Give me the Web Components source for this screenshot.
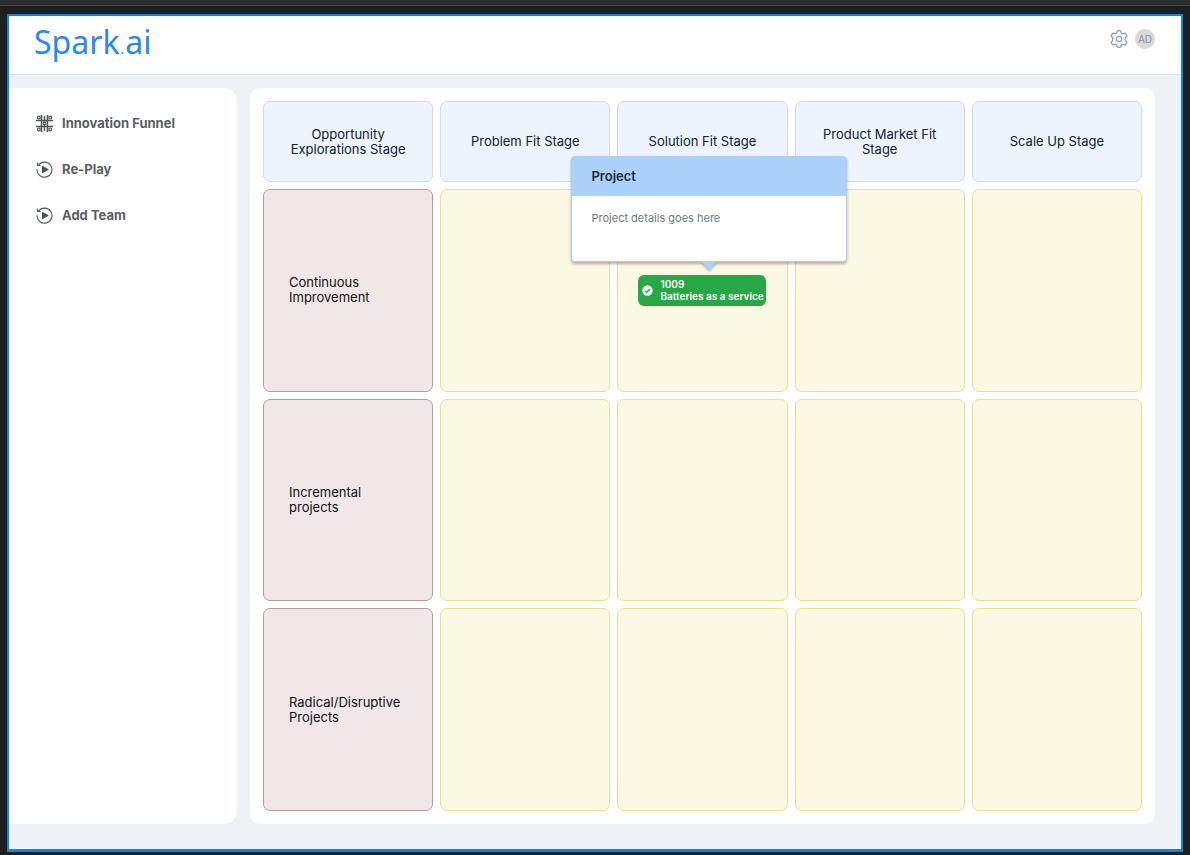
<!DOCTYPE html>
<html lang="en">
<head>
<meta charset="utf-8">
<title>Spark.ai</title>
<style>
  html, body { margin: 0; }
  body { background: #1e1e1e; font-family: Inter, "Liberation Sans", sans-serif; font-size: 13px; }
</style>
</head>
<body>
<app-frame>
  <app-header slot="header" initials="AD"></app-header>
  <side-nav slot="nav">
    <nav-item icon="funnel">Innovation Funnel</nav-item>
    <nav-item icon="replay">Re-Play</nav-item>
    <nav-item icon="replay">Add Team</nav-item>
  </side-nav>
  <funnel-board>
    <project-chip slot="cell-0-2" number="1009" name="Batteries as a service">
      <project-popover>
        <span slot="title">Project</span>
        Project details goes here
      </project-popover>
    </project-chip>
  </funnel-board>
</app-frame>
<script>
const define = (name, html, setup) => {
  const template = document.createElement('template');
  template.innerHTML = html;
  customElements.define(name, class extends HTMLElement {
    constructor() {
      super();
      this.attachShadow({ mode: 'open' }).append(template.content.cloneNode(true));
    }
    connectedCallback() { if (setup) setup(this, this.shadowRoot); }
  });
};

define('app-frame', `
  <style>
    :host { display: flex; flex-direction: column; box-sizing: border-box; min-height: 100vh; padding: 0 7px 3px; }
    .strip { height: 5px; margin: 0 -7px 8px; background: #2c2c2c; border-bottom: 1px solid #464646; }
    .window { flex: 1; display: flex; flex-direction: column; border: 2px solid #0d86e3; border-bottom-width: 3px; background: #eef1f6; }
    .body { flex: 1; display: flex; gap: 13px; padding: 13px 26px 25px 0; }
    ::slotted(side-nav) { flex: 0 0 228px; }
    ::slotted(funnel-board) { flex: 1; }
  </style>
  <div class="strip"></div>
  <div class="window">
    <slot name="header"></slot>
    <div class="body"><slot name="nav"></slot><slot></slot></div>
  </div>`);

define('app-header', `
  <style>
    :host { display: flex; justify-content: space-between; align-items: flex-start; box-sizing: border-box; height: 59px; padding: 3px 26px 0 25px; background: #fff; border-bottom: 1px solid #e0e6ef; }
    .logo { font: 32px/46px "Noto Sans", "Open Sans", sans-serif; color: #2b87f0; text-decoration: none; }
    .dot { margin: 0 1px; font-size: 14px; }
    .tools { display: flex; align-items: center; gap: 7px; padding-top: 10px; }
    button { display: block; border: 0; padding: 0; background: none; font: inherit; }
    svg { display: block; }
    .avatar { width: 20px; height: 20px; border-radius: 50%; background: #d9d9d9; color: #8592ad; font-size: 10px; line-height: 20px; }
  </style>
  <a class="logo" href="#">Spark<span class="dot">.</span>ai</a>
  <div class="tools">
    <button type="button" aria-label="Settings">
      <svg width="18" height="18" viewBox="0 0 18 18" fill="none" stroke="#8798c4" stroke-width="1.2" stroke-linejoin="round">
        <path transform="translate(-.9 0) scale(1.1 1)" d="M7.2 1.9Q7.4.7 8.4.7h1.2q1 0 1.2 1.2c.2 1.4 1.3 2 2.6 1.5q1.2-.5 1.7.4l.8 1.3q.5.9-.5 1.7c-1.1.9-1.1 3.5 0 4.4q1 .8.5 1.7l-.8 1.3q-.5.9-1.7.4c-1.3-.5-2.4.1-2.6 1.5q-.2 1.2-1.2 1.2H8.4q-1 0-1.2-1.2c-.2-1.4-1.3-2-2.6-1.5q-1.2.5-1.7-.4l-.8-1.3q-.5-.9.5-1.7c1.1-.9 1.1-3.5 0-4.4q-1-.8-.5-1.7l.8-1.3q.5-.9 1.7-.4c1.3.5 2.4-.1 2.6-1.5z"/>
        <circle cx="9" cy="9" r="2.7"/>
      </svg>
    </button>
    <button type="button" class="avatar"></button>
  </div>`, (host, root) => {
  root.querySelector('.avatar').textContent = host.getAttribute('initials');
});

define('side-nav', `
  <style>
    :host { display: block; box-sizing: border-box; padding: 21px 0 0 27px; background: #fff; border-radius: 0 13px 13px 0; }
    nav { display: flex; flex-direction: column; gap: 18px; }
  </style>
  <nav aria-label="Main"><slot></slot></nav>`);

const icons = {
  funnel: `<path d="M0 5.5h17M0 11.5h17M5.5 0v17M11.5 0v17M8.5 1v6M8.5 10v6" fill="none" stroke="#4f5357" stroke-width="1.5"/>
    <g fill="#fff" stroke="#4f5357" stroke-width="1.2"><circle cx="2.8" cy="2.6" r="1.4"/><circle cx="14.2" cy="2.6" r="1.4"/><circle cx="2.8" cy="14.4" r="1.4"/><circle cx="14.2" cy="14.4" r="1.4"/><circle cx="8.5" cy="8.5" r="1.4"/></g>`,
  replay: `<g fill="none" stroke="#55595d" stroke-width="1.1"><path d="M2.6 4A7.5 7.5 0 1 1 1 8.2"/><path d="M1.6 1.5v3h3"/></g>
    <path d="M5.9 5.6q0-.9.9-.5l5.4 2.8q1 .6 0 1.2l-5.4 2.8q-.9.4-.9-.5z" fill="#4f5357"/>`
};

define('nav-item', `
  <style>
    :host { display: block; }
    a { display: flex; align-items: center; gap: 9px; height: 28px; color: #5a5d61; font-weight: 700; text-decoration: none; }
    svg { display: block; flex: none; }
  </style>
  <a href="#"><svg width="17" height="17" viewBox="0 0 17 17" aria-hidden="true"></svg><span><slot></slot></span></a>`, (host, root) => {
  root.querySelector('svg').innerHTML = icons[host.getAttribute('icon')];
});

define('funnel-board', `
  <style>
    :host { display: flex; box-sizing: border-box; padding: 13px; background: #fff; border-radius: 10px; }
    table { flex: 1; display: grid; grid-template-columns: repeat(5, minmax(0, 1fr)); grid-template-rows: 81px repeat(3, minmax(100px, 1fr)); gap: 7px; }
    thead, tbody, tr { display: contents; }
    th, td { display: flex; align-items: center; justify-content: center; box-sizing: border-box; padding: 0 20px; border: 1px solid; border-radius: 7px; font-weight: 400; line-height: 15px; text-align: center; }
    thead th { background: #edf4fd; border-color: #d5dae0; color: #0d2230; }
    tbody th { justify-content: flex-start; padding: 0 25px; background: #f1e7e8; border-color: #b99a9c; color: #111; text-align: left; }
    td { background: #fbf8e3; border-color: #e8e093; }
  </style>
  <table><thead><tr></tr></thead><tbody></tbody></table>`, (host, root) => {
  const stages = ['Opportunity Explorations Stage', 'Problem Fit Stage', 'Solution Fit Stage', 'Product Market Fit Stage', 'Scale Up Stage'];
  const tracks = ['Continuous Improvement', 'Incremental projects', 'Radical/Disruptive Projects'];
  root.querySelector('thead tr').innerHTML = stages.map(s => `<th scope="col">${s}</th>`).join('');
  root.querySelector('tbody').innerHTML = tracks.map((t, r) =>
    `<tr><th scope="row">${t}</th>${[1, 2, 3, 4].map(c => `<td><slot name="cell-${r}-${c}"></slot></td>`).join('')}</tr>`).join('');
});

define('project-chip', `
  <style>
    :host { display: block; position: relative; flex: none; }
    button { display: flex; align-items: center; gap: 7px; width: 128px; height: 31px; border: 0; border-radius: 6px; padding: 0 0 0 4px; background: #28a745; color: #fff; font: 600 10px/12px Inter, "Liberation Sans", sans-serif; text-align: left; white-space: nowrap; }
    svg { flex: none; }
    b { display: block; font-weight: 600; }
  </style>
  <button type="button">
    <svg width="11" height="11" viewBox="0 0 11 11" aria-hidden="true"><circle cx="5.5" cy="5.5" r="5.2" fill="#fff"/><path d="M3.1 5.7l1.7 1.6L8 3.9" fill="none" stroke="#28a745" stroke-width="1.4"/></svg>
    <span><b class="number"></b><span class="name"></span></span>
  </button>
  <slot></slot>`, (host, root) => {
  root.querySelector('.number').textContent = host.getAttribute('number');
  root.querySelector('.name').textContent = host.getAttribute('name');
});

define('project-popover', `
  <style>
    :host { display: block; position: absolute; z-index: 1; left: -67px; bottom: calc(100% + 13px); box-sizing: border-box; width: 276px; border: 1px solid #abd0f9; border-radius: 4px; background: #fff; box-shadow: 0 2px 3px rgba(0, 0, 0, .3); text-align: left; line-height: 16px; }
    header { padding: 11px 19px 12px; background: #abd0f9; color: #15293a; font-weight: 600; }
    .text { min-height: 36px; padding: 14px 19px 15px; color: #707981; font-size: 11px; }
    svg { position: absolute; top: 100%; left: 50%; margin-left: -8px; filter: drop-shadow(0 2px 1px rgba(0, 0, 0, .25)); }
  </style>
  <header><slot name="title"></slot></header>
  <div class="text"><slot></slot></div>
  <svg width="16" height="9" viewBox="0 0 16 9" aria-hidden="true"><path d="M0 0h16L8 9z" fill="#abd0f9"/></svg>`);
</script>
</body>
</html>
